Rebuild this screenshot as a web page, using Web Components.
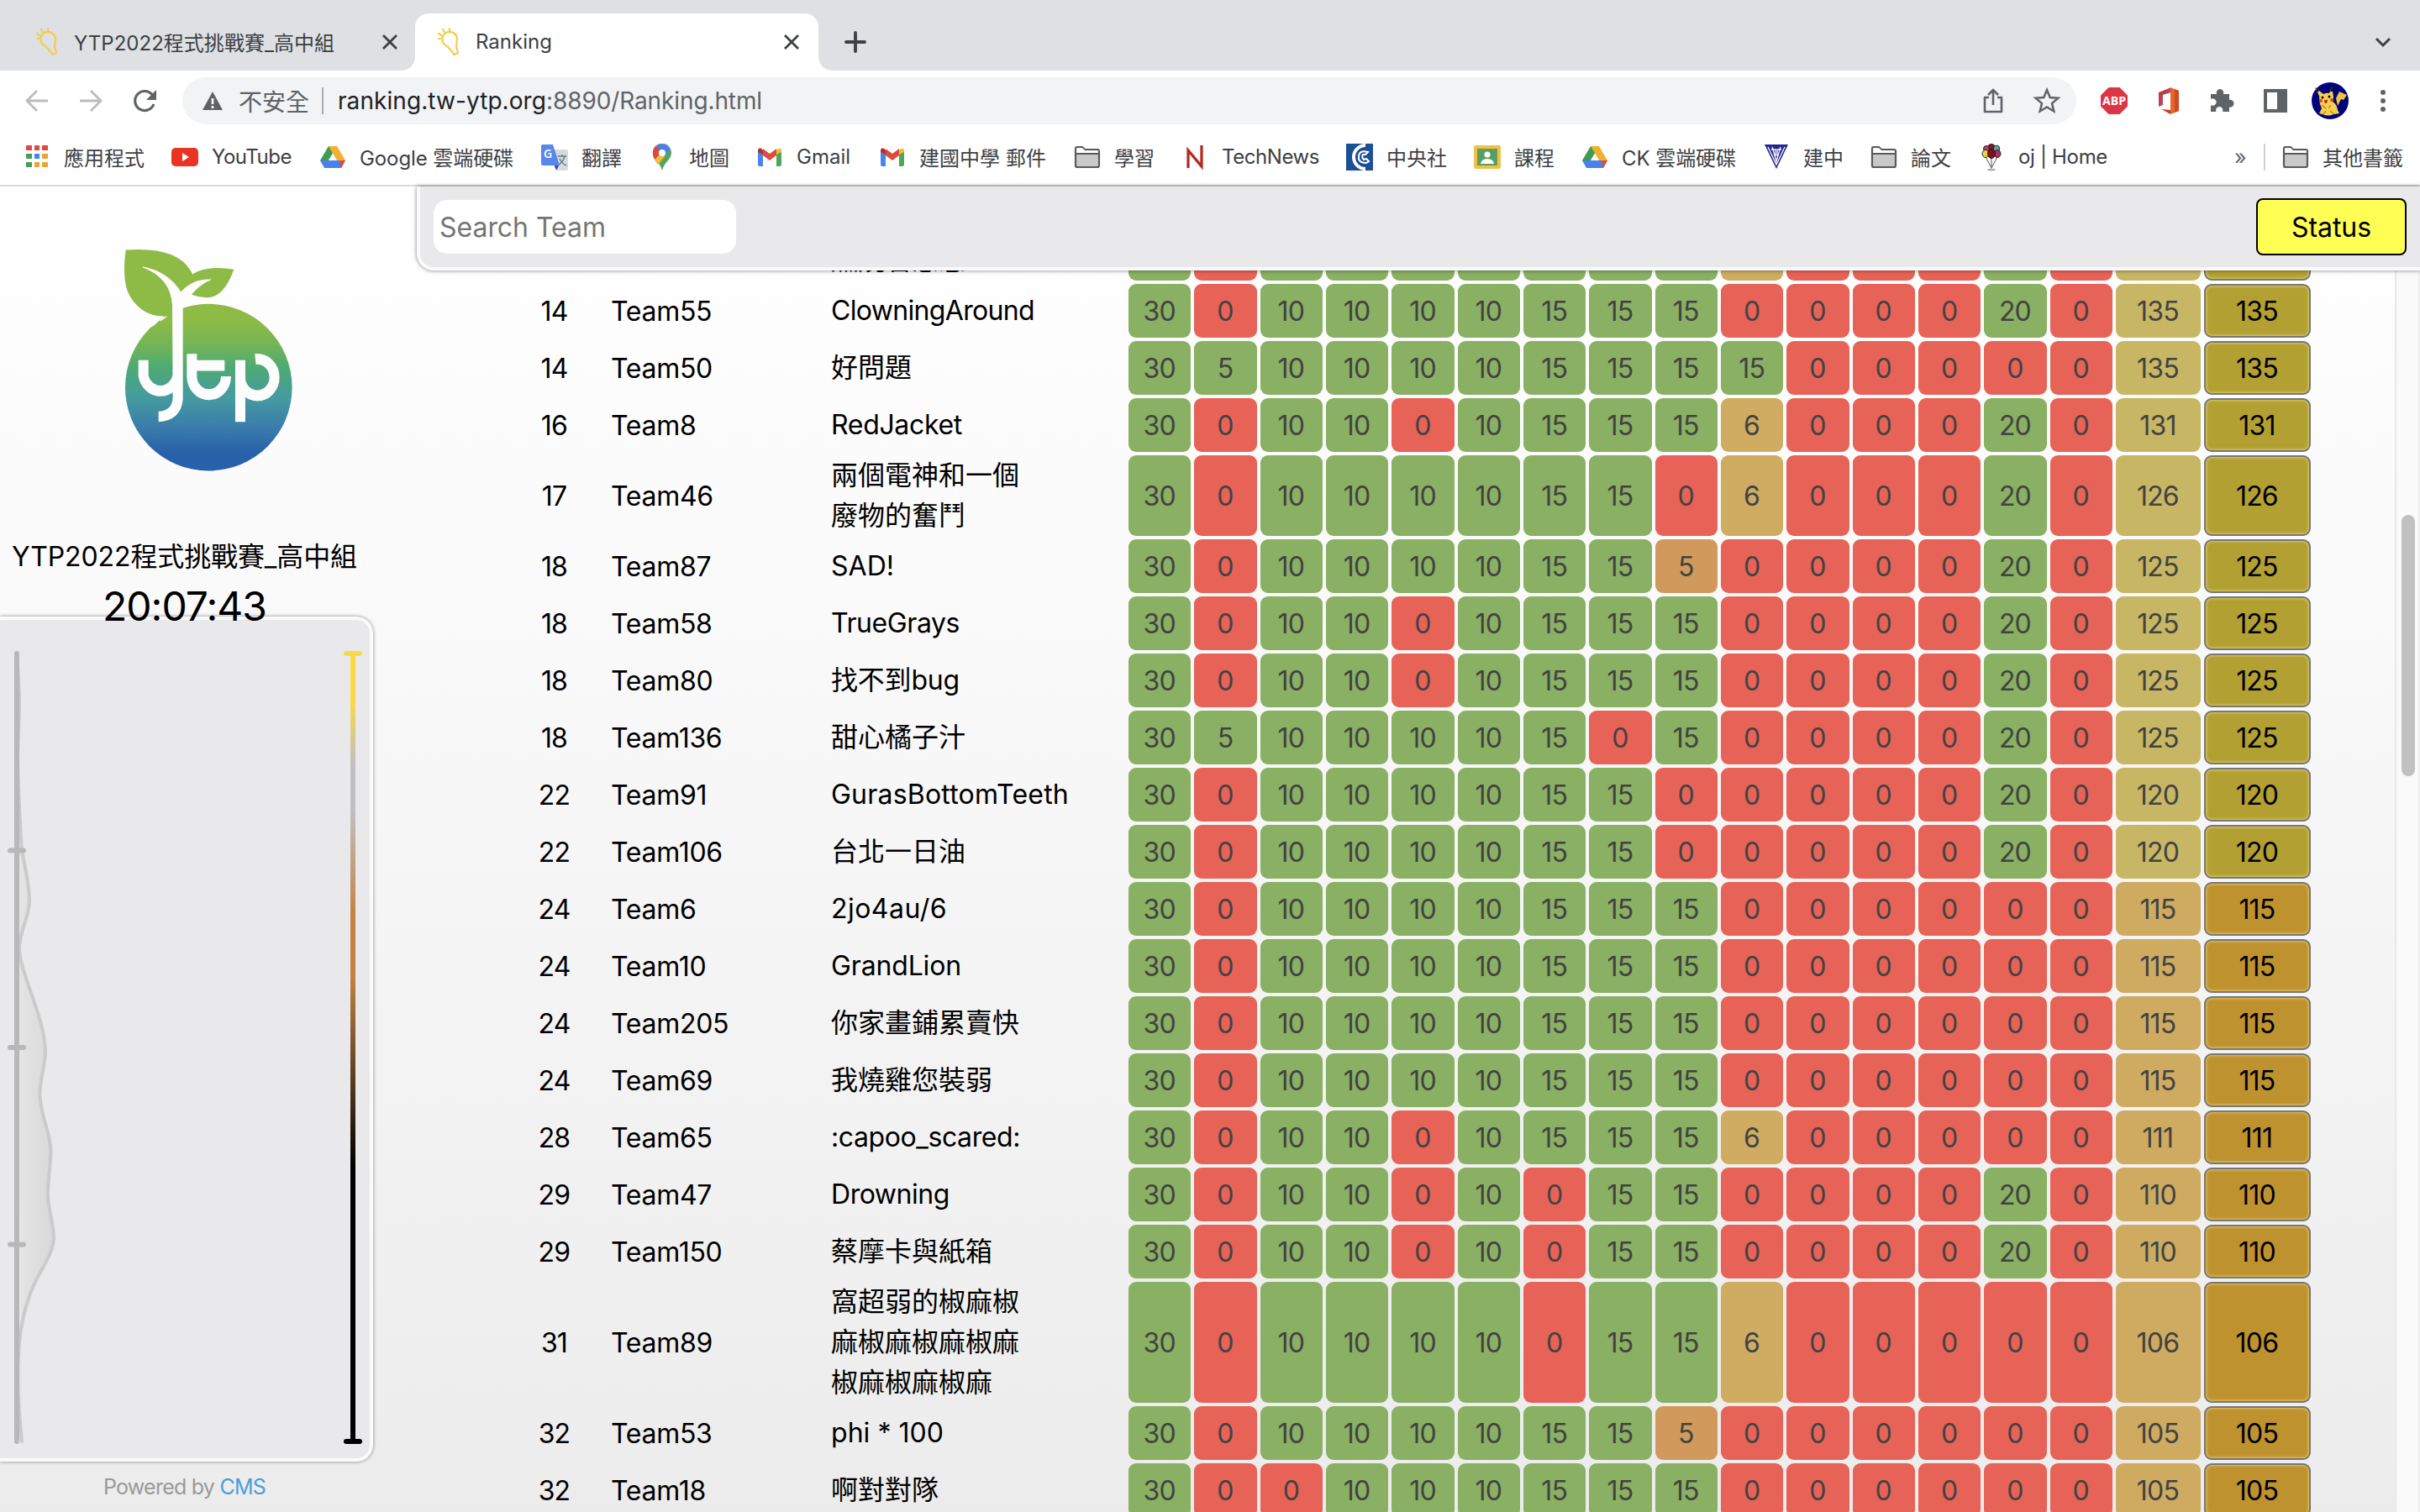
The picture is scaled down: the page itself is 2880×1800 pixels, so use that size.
<!DOCTYPE html>
<html lang="zh-Hant">
<head>
<meta charset="utf-8">
<title>Ranking</title>
<style>
html,body{margin:0;height:100%;overflow:hidden;background:#fff}
body{font-family:Inter,"Noto Sans CJK TC",sans-serif;color:#000}
</style>
</head>
<body>
<ranking-app></ranking-app>
<script>
const define=(name,css,html,setup)=>customElements.define(name,class extends HTMLElement{
  connectedCallback(){
    if(this.shadowRoot)return;
    const root=this.attachShadow({mode:'open'});
    root.innerHTML='<style>*{box-sizing:border-box}'+css+'</style>'+(typeof html==='function'?html(this):html);
    if(setup)setup(this,root);
  }
});

const drive='<path fill="#3f9b50" d="M11 3h10L11 20 6 27 1 20z"/><path fill="#f2b02f" d="M11 3h10l10 17H21z"/><path fill="#4a80ec" d="M1 20h30l-5 9H6z"/><path fill="#e24a36" d="M24 20h7l-5 9z"/><path fill="#fff" d="M16 12l5 8H11z"/>';
const gmail='<path fill="#4a84ee" d="M2 9v18q0 2 2 2h4V15z" transform="translate(0 -2)"/><path fill="#4fa658" d="M30 7v18q0 2-2 2h-4V13z"/><path fill="#f3bd35" d="M24 13V8q3-4 6-1v3z"/><path fill="#b5302a" d="M8 13V8Q5 3 2 7v3z"/><path fill="#dc4c40" d="M8 6l8 6 8-6v8l-8 6-8-6z"/>';
const folder='<path fill="#c9c9c9" stroke="#5a5a5a" stroke-width="2.2" stroke-linejoin="round" d="M2 27V6q0-2 2-2h6l3 3h15q2 0 2 2v17q0 2-2 2H4q-2 0-2-2z"/><path fill="#fff" d="M3.2 5.2h7l3 3h15.6v3.2H3.2z"/><path stroke="#5a5a5a" stroke-width="2" d="M3 12h26"/>';
const icons={
bulb:'<g fill="none" stroke="#f2cc4d" stroke-width="2.2" stroke-linecap="round"><path d="M22 30c-3-3-5-8-10-10-5-4-5-12 1-15s12 1 13 6c0 5-1 7-1 10 0 4 3 7 2 8l-5 2"/><path d="M17 0v3M9 1l2 3M4 6l3 2M4 12h2"/></g>',
close:'<path d="M8 8l16 16M24 8L8 24" stroke="#3c4043" stroke-width="2.8"/>',
plus:'<path d="M16 5v22M5 16h22" stroke="#3c4043" stroke-width="3.8" stroke-linecap="round"/>',
chev:'<path d="M8 12l8 8 8-8" fill="none" stroke="#3c4043" stroke-width="3"/>',
back:'<path d="M29 16H4M16 4L4 16l12 12" fill="none" stroke="#babcbe" stroke-width="2.8"/>',
fwd:'<path d="M3 16h25M16 4l12 12-12 12" fill="none" stroke="#babcbe" stroke-width="2.8"/>',
reload:'<path d="M27 20A11.5 11.5 0 1 1 24.500 8L27 11" fill="none" stroke="#5f6368" stroke-width="3.200"/><path d="M30 3v12H18z" fill="#5f6368"/>',
warn:'<path d="M16 5l12 22H4z" fill="#5f6368"/><path d="M16 13v7M16 22v3" stroke="#fff" stroke-width="2.600"/>',
share:'<path d="M11 12H6v17h20V12h-5M16 21V3M10 9l6-6 6 6" fill="none" stroke="#5f6368" stroke-width="2.600" stroke-linejoin="round"/>',
star:'<path d="M16 3l3.700 9 9.700.800-7.400 6.300 2.300 9.400-8.300-5-8.300 5L10 19.100 2.600 12.800l9.700-.800z" fill="none" stroke="#5f6368" stroke-width="2.500"/>',
abp:'<path d="M9.500 0h13L32 9.500v13L22.500 32h-13L0 22.500v-13z" fill="#dc3545"/><text x="16" y="21" text-anchor="middle" font-family="Open Sans" font-weight="700" font-size="13.500" textLength="28" lengthAdjust="spacingAndGlyphs" fill="#fff">ABP</text>',
office:'<defs><linearGradient id="o" y2="1"><stop stop-color="#b23a22"/><stop offset="1" stop-color="#c0509a"/></linearGradient></defs><path d="M20 0L5 6v17l5-2V9l10-3z" fill="url(#o)"/><path d="M19 0l10 4v24l-10 4z" fill="#e8642a"/><path d="M5 24l14 8v-5l-10-1z" fill="#c43a26"/><path d="M24 2l5 2v24l-5 2z" fill="#cf4a20"/>',
puzzle:'<path d="M3 9h7a4.300 4.300 0 1 1 8 0h7v7a4.400 4.400 0 1 1 0 8.500V30h-8a4.200 4.200 0 1 0-7.500 0H3v-8a4.200 4.200 0 1 0 0-7z" fill="#5f6368" transform="translate(0 -1)"/>',
panel:'<path d="M2 2h28v28H2zM6 6v20h12V6z" fill="#5f6368" fill-rule="evenodd"/>',
pika:'<circle cx="22" cy="22" r="22" fill="#000478"/><path d="M29 19l4-8 9 4-4 6-3-1-4 8z" fill="#f4c33c"/><path d="M9 16L4 6l10 8q4-2 7-1l3-8 2 12-1 6q5 3 6 10l2 4-7 1q-6 3-13 0l-4-1 3-6-2-5z" fill="#f6d04d"/><path d="M4 6l5 4-2 2zM24 5l2 6h-4z" fill="#141414"/><circle cx="13" cy="18" r="1.500" fill="#000"/><circle cx="21" cy="17" r="1.500" fill="#000"/><circle cx="11" cy="22" r="2" fill="#e0402a"/><circle cx="24" cy="21" r="2" fill="#e0402a"/><path d="M15 21q3 1 4-1 0 5-2 5t-2-4z" fill="#a82a20"/><path d="M12 27l5 4M23 27l-3 4M14 38l3-4M26 37l-4-3" stroke="#b8801c" stroke-width="1.200"/>',
dots:'<circle cx="16" cy="6" r="3" fill="#5f6368"/><circle cx="16" cy="16" r="3" fill="#5f6368"/><circle cx="16" cy="26" r="3" fill="#5f6368"/>',
apps:'<g fill="#4a9a5a"><path fill="#e04a3e" d="M3 2h7v6H3zM13 2h6v6h-6zM22 2h7v6h-7z"/><path d="M3 12h7v6H3z"/><path fill="#4285f4" d="M13 12h6v6h-6z"/><path fill="#e8a535" d="M22 12h7v6h-7zM13 22h6v6h-6zM22 22h7v6h-7z"/><path d="M3 22h7v6H3z"/></g>',
youtube:'<rect y="5" width="32" height="22" rx="5" fill="#ea3323"/><path d="M13 11l8 5-8 5z" fill="#fff"/>',
drive,gmail,folder,
translate:'<path d="M13 7h17q2 0 2 2v21q0 2-2 2H19z" fill="#d8d9db"/><path d="M15 24h7l-4 8z" fill="#3446a8"/><path d="M2 1h12l8 25H2q-2 0-2-2V3q0-2 2-2z" fill="#5688ea"/><text x="3" y="17" font-family="Open Sans" font-weight="600" font-size="14" fill="#fff">G</text><path d="M20 15h10M25 13v2M28 15q-1 6-7 10M22 18q3 6 8 8" stroke="#68797f" stroke-width="1.500" fill="none"/>',
maps:'<path d="M16 0a11 11 0 0 1 11 11c0 8-8 10-11 21C13 21 5 19 5 11A11 11 0 0 1 16 0z" fill="#55a65a"/><path d="M16 0a11 11 0 0 1 10 7L11 25Q5 18 5 11 5 0 16 0z" fill="#f3bc3c"/><path d="M16 0a11 11 0 0 1 10 7l-7 8-11-11q3-4 8-4z" fill="#4a80e8"/><path d="M8 3l8 7-9 9Q2 9 8 3z" fill="#da4a3c"/><circle cx="16" cy="11" r="4" fill="#fff"/>',
technews:'<path d="M8 29V8L24 27V2" fill="none" stroke="#b5271c" stroke-width="3.200"/>',
cna:'<path fill="#1d4f96" d="M0 0h32v32H0z"/><path d="M23 2A14 14 0 1 0 23 30" fill="none" stroke="#fff" stroke-width="4"/><path d="M26 10q-10-3-11 5t9 8l3-2-3-3-3 1q-3-3-1-6l3 0z" fill="none" stroke="#fff" stroke-width="2"/>',
classroom:'<rect y="2" width="32" height="28" rx="2" fill="#f0c048"/><path d="M4 6h24v20H4z" fill="#5b9e60"/><circle cx="16" cy="13" r="3.500" fill="#fff"/><path d="M8 24q1-6 8-6t8 6z" fill="#fff"/>',
ck:'<path d="M2 1h28L16 30z" fill="#26278c"/><path d="M6 4l10 21L26 4M11 4l5 17 5-17M10 7h5v8M22 7h-5v8" fill="none" stroke="#fff" stroke-width="1.300"/>',
balloons:'<path d="M8 14l8 15 8-15M16 14v15" stroke="#777" stroke-width="1.200" fill="none"/><g stroke="#1a1a1a" stroke-width=".9"><ellipse cx="16" cy="4" rx="4" ry="3.500" fill="#8c1020"/><circle cx="10" cy="6" r="3.500" fill="#b83a80"/><circle cx="22" cy="6" r="3.800" fill="#52a8a0"/><ellipse cx="9" cy="12" rx="4" ry="4.500" fill="#e8d048"/><ellipse cx="23" cy="12" rx="4" ry="4.500" fill="#a83070"/><ellipse cx="16" cy="12" rx="4.500" ry="5.500" fill="#801018"/></g><ellipse cx="16" cy="31" rx="5" ry="1.300" fill="#aaa"/>'
};
define('ui-icon',':host{display:block;flex:none;width:32px;height:32px}svg{display:block;width:100%;height:100%;overflow:visible}',
 e=>`<svg viewBox="0 0 ${e.getAttribute('box')||32} ${e.getAttribute('box')||32}" fill="none">${icons[e.getAttribute('name')]}</svg>`);

/* Text that is tracked so that its line has a given width. */
define('fit-text',':host{display:block;white-space:pre}span{display:inline-block}','<span><slot></slot></span>',(e,r)=>{
  const w=+e.getAttribute('w');if(!w)return;
  const s=r.querySelector('span'),n=[...e.textContent].length;
  s.style.letterSpacing=((w-s.getBoundingClientRect().width)/n)+'px';
});

define('browser-tab',`:host{display:flex;align-items:center;height:68px;color:#3c4043;font-size:24px;position:relative;padding:0 16px 0 24px}
 :host([active]){background:#fff;border-radius:16px 16px 0 0}
 :host([active])::before,:host([active])::after{content:"";position:absolute;bottom:0;width:16px;height:16px;left:-16px;background:radial-gradient(circle at 0 0,transparent 15.500px,#fff 16px)}
 :host([active])::after{left:auto;right:-16px;background:radial-gradient(circle at 100% 0,transparent 15.500px,#fff 16px)}
 fit-text{margin:0 0 2px 16px}.x{margin-left:auto}`,
 e=>`<ui-icon name="bulb"></ui-icon><fit-text w="${e.getAttribute('w')}">${e.getAttribute('label')}</fit-text><ui-icon class="x" name="close"></ui-icon>`);

define('tab-strip',`:host{display:flex;align-items:flex-start;height:84px;padding-top:16px;background:#dee0e4}
 .a{width:478px;margin-left:16px;padding-right:14px}.b{width:480px}.p{margin:18px 0 0 27.500px}.c{margin:18px 28px 0 auto}`,
 `<browser-tab class="a" w="310" label="YTP2022程式挑戰賽_高中組"></browser-tab><browser-tab class="b" active w="91" label="Ranking"></browser-tab><ui-icon class="p" name="plus"></ui-icon><ui-icon class="c" name="chev"></ui-icon>`);

define('tool-bar',`:host{display:flex;align-items:center;height:72px;background:#fff;padding:0 28px 0 28px}
 .nav{display:flex;gap:32px}.box{display:flex;align-items:center;height:56px;width:2255px;margin-left:29px;border-radius:28px;background:#f1f3f4;padding:0 19px 0 20px;font-size:28px;color:#5f6368}
 .sec{margin-left:15px}.bar{width:2px;height:32px;background:#a8abae;margin:0 17px 0 15px}.u{display:flex}.host{color:#202124}.sh{margin-left:auto}.st{margin-left:32px}
 .ext{display:flex;align-items:center;gap:32px;margin-left:29.500px}.pk{width:44px;height:44px;margin:0 -7px 0 -5px}`,
 `<div class="nav"><ui-icon name="back"></ui-icon><ui-icon name="fwd"></ui-icon><ui-icon name="reload"></ui-icon></div>
 <div class="box"><ui-icon name="warn"></ui-icon><fit-text class="sec" w="84">不安全</fit-text><div class="bar"></div><div class="u"><fit-text class="host" w="248">ranking.tw-ytp.org</fit-text><fit-text w="257">:8890/Ranking.html</fit-text></div><ui-icon class="sh" name="share"></ui-icon><ui-icon class="st" name="star"></ui-icon></div>
 <div class="ext"><ui-icon name="abp"></ui-icon><ui-icon name="office"></ui-icon><ui-icon name="puzzle"></ui-icon><ui-icon name="panel"></ui-icon><ui-icon class="pk" name="pika" box="44"></ui-icon><ui-icon name="dots"></ui-icon></div>`);

define('book-mark',`:host{display:flex;align-items:center;flex:none;font-size:24px;color:#3c4043}fit-text{margin:0 0 1px 16px}`,
 e=>`<ui-icon name="${e.getAttribute('icon')}"></ui-icon><fit-text w="${e.getAttribute('w')}">${e.getAttribute('label')}</fit-text>`);

const marks=[['apps','應用程式',96,28],['youtube','YouTube',95,204],['drive','Google 雲端硬碟',183,380],['translate','翻譯',48,644],['maps','地圖',48,772],['gmail','Gmail',64,900],['gmail','建國中學 郵件',151,1046],['folder','學習',48,1278],['technews','TechNews',116,1406],['cna','中央社',72,1602],['classroom','課程',48,1754],['drive','CK 雲端硬碟',136,1882],['ck','建中',48,2098],['folder','論文',48,2226],['balloons','oj | Home',106,2354]];
define('bookmark-bar',`:host{display:flex;align-items:center;height:66px;background:#fff;border-bottom:2px solid #dadbdd;padding-left:28px;padding-bottom:2px}
 .more{margin-left:-3px;font-size:25px;color:#5f6368;width:18px}.bar{width:2px;height:32px;background:#cfd1d4;margin:0 20px 0 17px}`,
 ()=>marks.map((m,i)=>`<book-mark icon="${m[0]}" label="${m[1]}" w="${m[2]}" style="width:${(marks[i+1]?.[3]??2662)-m[3]}px"></book-mark>`).join('')+
 `<div class="more">»</div><div class="bar"></div><book-mark icon="folder" label="其他書籤" w="96"></book-mark>`);

define('ytp-logo',`:host{display:block;width:203.300px;height:268px}svg{display:block;width:100%;height:100%}`,
`<svg viewBox="440 210 610 750" preserveAspectRatio="none"><defs><linearGradient id="g" gradientUnits="userSpaceOnUse" x1="0" y1="397" x2="0" y2="953"><stop offset=".1" stop-color="#8ebb45"/><stop offset=".24" stop-color="#74b556"/><stop offset=".38" stop-color="#4eaa74"/><stop offset=".57" stop-color="#459aa0"/><stop offset=".74" stop-color="#3a7cab"/><stop offset=".9" stop-color="#2860aa"/></linearGradient></defs>
<ellipse cx="747" cy="675" rx="298" ry="278" fill="url(#g)"/>
<path d="M598 380h58v31q-20 3-38 15l-42 28-20-10z" fill="#fdfdfd"/>
<path d="M451 217Q630 205 680 283 695 300 690 320L650 357Q614 402 617 436 520 450 468 375 435 325 451 217z" fill="#8ebb45"/>
<path d="M692 296Q745 268 837 282 798 384 732 375 705 373 686 366 L650 357z" fill="#8ebb45"/>
<path d="M586 440Q608 435 617 436V412Q560 450 545 478z" fill="#8ebb45"/><path d="M530 431Q560 440 588 439L548 472 505 455z" fill="#fdfdfd"/>
<path d="M512 272Q605 290 648 357 690 312 757 315 755 320 740 323 700 345 680 374 L655 395V715Q648 785 568 790V755Q617 753 619 708 L617 400Q610 310 512 276z" fill="#fdfdfd"/>
<g fill="none" stroke="#fdfdfd" stroke-width="36"><path d="M514 584v52a62 62 0 0 0 122 0M687 563v75a61 61 0 0 0 122 0M700 602h104M860 790V584M860 638a61 61 0 1 0 54-57"/></g>
</svg>`);

define('history-chart',`:host{display:block;height:1006px;width:444px;background:#e9e9eb;border:4px solid #fbfbfb;border-left:0;border-radius:0 20px 20px 0;box-shadow:0 0 4px rgba(0,0,0,.45)}svg{display:block;width:440px;height:998px}`,
`<svg viewBox="0 738 440 998"><defs><linearGradient id="f" gradientUnits="userSpaceOnUse" x1="20" x2="64" y1="0" y2="0"><stop stop-color="#e5e5e6"/><stop offset="1" stop-color="#d8d8d8"/></linearGradient>
<linearGradient id="s" gradientUnits="userSpaceOnUse" x1="0" x2="0" y1="778" y2="1716"><stop offset=".06" stop-color="#fad947"/><stop offset=".14" stop-color="#c0c0c0"/><stop offset=".2" stop-color="#c0c0c0"/><stop offset=".33" stop-color="#c38343"/><stop offset=".41" stop-color="#c38343"/><stop offset=".65" stop-color="#000"/></linearGradient></defs>
<path fill="url(#f)" stroke="#cbcbcb" stroke-width="4" stroke-linecap="round" d="M20 778C22 805 23 825 23 838C23 860 21 885 21 905C22 940 24 985 26 1012C30 1035 35 1052 35 1072C35 1092 24 1105 23 1129C24 1160 53 1210 54 1251C54 1270 47 1285 47.500 1304C49 1332 60 1348 60.500 1370C60 1390 57 1405 57 1422C57 1440 64 1455 64 1474C63 1497 44 1515 35 1543C23 1575 21 1615 21 1640C21 1670 24 1692 26 1716"/>
<path d="M20 778V1716" stroke="#b8b8b8" stroke-width="6" stroke-linecap="round"/><path d="M12 1012.500h16M12 1247h16M12 1481.500h16" stroke="#b8b8b8" stroke-width="6" stroke-linecap="round"/>
<path d="M417 778h6V1716h-6z" fill="url(#s)"/><path d="M412 778h16" stroke="#fad947" stroke-width="6" stroke-linecap="round"/><path d="M412 1716h16" stroke="#000" stroke-width="6" stroke-linecap="round"/></svg>`);

define('side-bar',`:host{display:flex;flex-direction:column;width:496px;flex:none;padding-top:73px}
 ytp-logo{margin-left:146px}.t,.k,.p{width:439px;display:flex;justify-content:center;line-height:48px;font-size:32px}
 .t{margin-top:76px}.k{margin-top:7px;line-height:56px;height:56px;font-size:48px;position:relative;z-index:1}history-chart{margin-top:-16px}
 .p{margin-top:14px;line-height:32px;font-size:25px;color:#999}.p a{color:#489fd8}`,
 `<ytp-logo></ytp-logo><div class="t"><fit-text w="411">YTP2022程式挑戰賽_高中組</fit-text></div><div class="k"><fit-text w="195">20:07:43</fit-text></div><history-chart></history-chart><div class="p"><fit-text w="193">Powered by <a>CMS</a></fit-text></div>`);

define('search-header',`:host{display:flex;flex:none;align-items:center;justify-content:space-between;height:100px;background:#e9e9eb;border:solid #fafafa;border-width:0 0 4px 4px;border-radius:0 0 0 20px;box-shadow:0 0 5px rgba(0,0,0,.5);position:relative;z-index:1;padding:0 16px;font-size:32px}
 .in{width:360px;height:64px;background:#fff;border-radius:16px;display:flex;align-items:center;padding-left:7px;color:#757575}
 .st{width:179px;height:68px;border:2px solid #000;border-radius:8px;background:#fffe54;display:flex;align-items:center;justify-content:center}`,
 `<div class="in"><fit-text w="198">Search Team</fit-text></div><div class="st"><fit-text w="95">Status</fit-text></div>`);

define('score-cell',`:host{display:flex;align-items:center;justify-content:center;margin-right:4px;padding:1px 1px 0 0;border-radius:9px;color:#424242;letter-spacing:-.8px;background:#e76357}
 :host([k=full]){background:#89b063}:host([k=six]){background:#cfac62}:host([k=five]){background:#d19a5c}
 :host([k=hi]){background:#c7b664}:host([k=lo]){background:#ceab61}
 :host([g]){color:#000;border:2px solid #777;background:#be922e;box-shadow:inset 0 0 3px 1px #e0c468}:host([g=hi]){background:#b3a032;box-shadow:inset 0 0 3px 1px #d8cb70}`,'<slot></slot>');

define('rank-row',`:host{display:grid;grid-template-columns:108px 262px 353px repeat(15,78.333px) 105px 131px;margin-bottom:4px;padding-left:124px;min-height:64px;font-size:32px;line-height:48px}
 .r{width:79px;text-align:center;align-self:center;letter-spacing:-.8px;padding-top:1px}.n{align-self:center;margin-left:-1px}.tm{align-self:center;letter-spacing:-.3px;margin-left:-1px;padding-top:1px}`,
 e=>{const d=e.data,h=d.total>=120?'hi':'lo';
  const lines=d.name.split('/n');
  return `<div class="r">${d.rank}</div><div class="tm">${d.team}</div><div class="n">${lines.map(l=>`<fit-text w="${d.w||0}">${l}</fit-text>`).join('')}</div>`+
  d.s.map(v=>`<score-cell k="${v==0?'none':v==6?'six':v==-5?'five':'full'}">${d.rank===''?'':Math.abs(v)}</score-cell>`).join('')+
  `<score-cell k="${h}">${d.rank===''?'':d.total}</score-cell><score-cell g="${h}">${d.rank===''?'':d.total}</score-cell>`});

/* A partial score of 5 is stored as -5; a plain 5 is a full score. */
const rows=[
['','','燃燒著意志',0,[30,0,10,10,10,10,15,15,15,6,0,0,0,20,0],136],
[14,'Team55','ClowningAround',242,[30,0,10,10,10,10,15,15,15,0,0,0,0,20,0],135],
[14,'Team50','好問題',0,[30,5,10,10,10,10,15,15,15,15,0,0,0,0,0],135],
[16,'Team8','RedJacket',156,[30,0,10,10,0,10,15,15,15,6,0,0,0,20,0],131],
[17,'Team46','兩個電神和一個/n廢物的奮鬥',0,[30,0,10,10,10,10,15,15,0,6,0,0,0,20,0],126],
[18,'Team87','SAD!',75,[30,0,10,10,10,10,15,15,-5,0,0,0,0,20,0],125],
[18,'Team58','TrueGrays',153,[30,0,10,10,0,10,15,15,15,0,0,0,0,20,0],125],
[18,'Team80','找不到bug',153,[30,0,10,10,0,10,15,15,15,0,0,0,0,20,0],125],
[18,'Team136','甜心橘子汁',0,[30,5,10,10,10,10,15,0,15,0,0,0,0,20,0],125],
[22,'Team91','GurasBottomTeeth',283,[30,0,10,10,10,10,15,15,0,0,0,0,0,20,0],120],
[22,'Team106','台北一日油',0,[30,0,10,10,10,10,15,15,0,0,0,0,0,20,0],120],
[24,'Team6','2jo4au/6',138,[30,0,10,10,10,10,15,15,15,0,0,0,0,0,0],115],
[24,'Team10','GrandLion',155,[30,0,10,10,10,10,15,15,15,0,0,0,0,0,0],115],
[24,'Team205','你家畫鋪累賣快',0,[30,0,10,10,10,10,15,15,15,0,0,0,0,0,0],115],
[24,'Team69','我燒雞您裝弱',0,[30,0,10,10,10,10,15,15,15,0,0,0,0,0,0],115],
[28,'Team65',':capoo_scared:',225,[30,0,10,10,0,10,15,15,15,6,0,0,0,0,0],111],
[29,'Team47','Drowning',141,[30,0,10,10,0,10,0,15,15,0,0,0,0,20,0],110],
[29,'Team150','蔡摩卡與紙箱',0,[30,0,10,10,0,10,0,15,15,0,0,0,0,20,0],110],
[31,'Team89','窩超弱的椒麻椒/n麻椒麻椒麻椒麻/n椒麻椒麻椒麻',0,[30,0,10,10,10,10,0,15,15,6,0,0,0,0,0],106],
[32,'Team53','phi * 100',134,[30,0,10,10,10,10,15,15,-5,0,0,0,0,0,0],105],
[32,'Team18','啊對對隊',0,[30,0,0,10,10,10,15,15,15,0,0,0,0,0,0],105]];
define('rank-table',`:host{display:flex;flex:1;min-height:0;overflow:hidden}.rows{width:2354px;margin-top:-36px}rank-row:first-child{min-height:48px;height:48px}
 .track{width:30px;background:#fafafa;border-left:2px solid #e8e8e8;border-right:2px solid #efefef;padding:291px 4px 0 6px}.thumb{height:311px;border-radius:8px;background:#c1c1c1}`,
 '<div class="rows"></div><div class="track"><div class="thumb"></div></div>',(e,r)=>{
  const box=r.querySelector('.rows');
  for(const [rank,team,name,w,s,total] of rows){const row=document.createElement('rank-row');row.data={rank,team,name,w,s,total};box.append(row)}
 });

define('ranking-app',`:host{display:flex;flex-direction:column;width:2880px;height:1800px;overflow:hidden}
 .page{display:flex;flex:1;min-height:0;background:linear-gradient(#fff,#fafafa 30%,#ececec)}.main{display:flex;flex-direction:column;flex:1;min-width:0}`,
 '<tab-strip></tab-strip><tool-bar></tool-bar><bookmark-bar></bookmark-bar><div class="page"><side-bar></side-bar><div class="main"><search-header></search-header><rank-table></rank-table></div></div>');
</script>
</body>
</html>
